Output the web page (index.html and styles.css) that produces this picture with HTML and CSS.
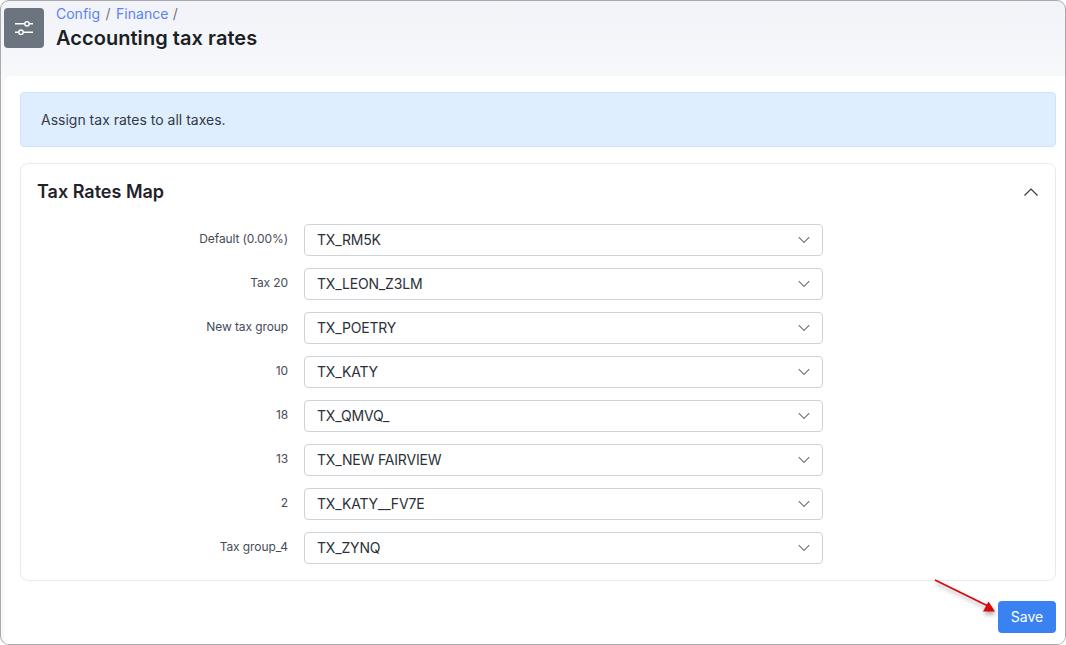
FILE: index.html
```html
<!DOCTYPE html>
<html lang="en">
<head>
    <meta charset="UTF-8">
    <title>Accounting tax rates</title>
    <link rel="stylesheet" href="styles.css">
</head>
<body>
    <div class="window">
        <header class="page-head">
            <div class="head-icon">
                <svg width="18" height="16" viewBox="0 0 18 16" fill="none" stroke="#fff" stroke-width="1.4">
                    <path d="M0 3.800h9.800M14.200 3.800H18M0 12.200h3.800M8.200 12.200H18"/>
                    <circle cx="12" cy="3.800" r="2.200"/>
                    <circle cx="6" cy="12.200" r="2.200"/>
                </svg>
            </div>
            <div>
                <nav class="crumbs">
                    <a href="#">Config</a><span>/</span><a href="#">Finance</a><span class="last">/</span>
                </nav>
                <h1>Accounting tax rates</h1>
            </div>
        </header>

        <main class="content">
            <div class="alert">Assign tax rates to all taxes.</div>

            <section class="card">
                <div class="card-head">
                    <h2>Tax Rates Map</h2>
                    <svg width="16" height="10" viewBox="0 0 16 10" fill="none" stroke="#3f3a36" stroke-width="1.2">
                        <path d="M1.500 8.500 8 2l6.500 6.500"/>
                    </svg>
                </div>
                <div class="row"><label>Default (0.00%)</label><div class="select">TX_RM5K</div></div>
                <div class="row"><label>Tax 20</label><div class="select">TX_LEON_Z3LM</div></div>
                <div class="row"><label>New tax group</label><div class="select">TX_POETRY</div></div>
                <div class="row"><label>10</label><div class="select">TX_KATY</div></div>
                <div class="row"><label>18</label><div class="select">TX_QMVQ_</div></div>
                <div class="row"><label>13</label><div class="select">TX_NEW FAIRVIEW</div></div>
                <div class="row"><label>2</label><div class="select">TX_KATY__FV7E</div></div>
                <div class="row"><label>Tax group_4</label><div class="select">TX_ZYNQ</div></div>
            </section>

            <div class="actions">
                <button class="save">Save</button>
            </div>
        </main>

        <svg class="arrow" width="70" height="40" viewBox="0 0 70 40">
            <path d="M1 1 54 27" stroke="#d5090f" stroke-width="1.800"/>
            <path d="M61 32.500 49 32.500 54.500 22.500Z" fill="#d5090f"/>
        </svg>
    </div>
</body>
</html>
```

FILE: styles.css
```css
* {
    box-sizing: border-box;
}

html, body {
    height: 100%;
}

body {
    margin: 0;
    background: #fff;
    font-family: 'Inter', 'Liberation Sans', sans-serif;
    color: #2b3038;
}

.window {
    position: relative;
    height: 645px;
    border: 1px solid #a9aaa9;
    border-radius: 9px;
    overflow: hidden;
    background: linear-gradient(to bottom, #f2f3f8, #f7f8fc 75px);
}

/* header */
.page-head {
    display: flex;
    gap: 12px;
    height: 75px;
    padding: 7px 3px 0;
}

.head-icon {
    display: flex;
    align-items: center;
    justify-content: center;
    flex: none;
    width: 40px;
    height: 40px;
    border-radius: 4px;
    background: #6c757f;
}

.crumbs {
    display: flex;
    gap: 5.5px;
    height: 14px;
    margin-top: -1px;
    font-size: 14px;
    line-height: 14px;
    color: #6c757f;
}

.crumbs a {
    color: #5b83f0;
    text-decoration: none;
}

.crumbs .last {
    margin-left: -1px;
}

h1 {
    margin: 4px 0 0;
    font-size: 20px;
    line-height: 26px;
    font-weight: 600;
    letter-spacing: 0.05px;
    color: #1c1f24;
}

/* content */
.content {
    height: 568px;
    margin-left: 3px;
    padding: 16px 9px 0 16px;
    background: #fff;
    border-radius: 8px 0 0 0;
}

.alert {
    height: 55px;
    padding: 0 20px;
    font-size: 14px;
    line-height: 54px;
    color: #343a46;
    background: #deeefe;
    border: 1px solid #cde4fb;
    border-radius: 4px;
}

.card {
    height: 418px;
    margin-top: 16px;
    padding: 0 16px;
    border: 1px solid #e8eaee;
    border-radius: 8px;
}

.card-head {
    display: flex;
    align-items: center;
    justify-content: space-between;
    height: 60px;
    padding-bottom: 5px;
}

h2 {
    margin: 0;
    font-size: 18px;
    font-weight: 600;
    color: #1f2329;
}

.row {
    display: flex;
    gap: 16px;
    height: 32px;
    margin-bottom: 12px;
}

.row label {
    width: 251px;
    padding-top: 7px;
    font-size: 12px;
    line-height: 15px;
    letter-spacing: -0.1px;
    text-align: right;
    color: #454c57;
}

.select {
    width: 519px;
    height: 32px;
    padding: 0 12px;
    font-size: 14px;
    letter-spacing: -0.17px;
    line-height: 30px;
    color: #2b3038;
    border: 1px solid #ced2da;
    border-radius: 4px;
    background: #fff url("data:image/svg+xml,%3Csvg xmlns='http://www.w3.org/2000/svg' width='12' height='8' viewBox='0 0 12 8' fill='none' stroke='%23717a86' stroke-width='1.200'%3E%3Cpath d='M.7 1.200 6 6.500l5.300-5.300'/%3E%3C/svg%3E") no-repeat right 12px center;
}

.actions {
    display: flex;
    justify-content: flex-end;
    margin-top: 20px;
}

.save {
    width: 58px;
    height: 32px;
    padding: 0 0 2px;
    font-family: inherit;
    font-size: 14px;
    color: #fff;
    background: #3a82f2;
    border: none;
    border-radius: 4px;
}

/* annotation laid over the page */
.arrow {
    position: absolute;
    left: 933px;
    top: 578px;
    filter: drop-shadow(1px 3px 2px rgba(0, 0, 0, 0.35));
}
```
